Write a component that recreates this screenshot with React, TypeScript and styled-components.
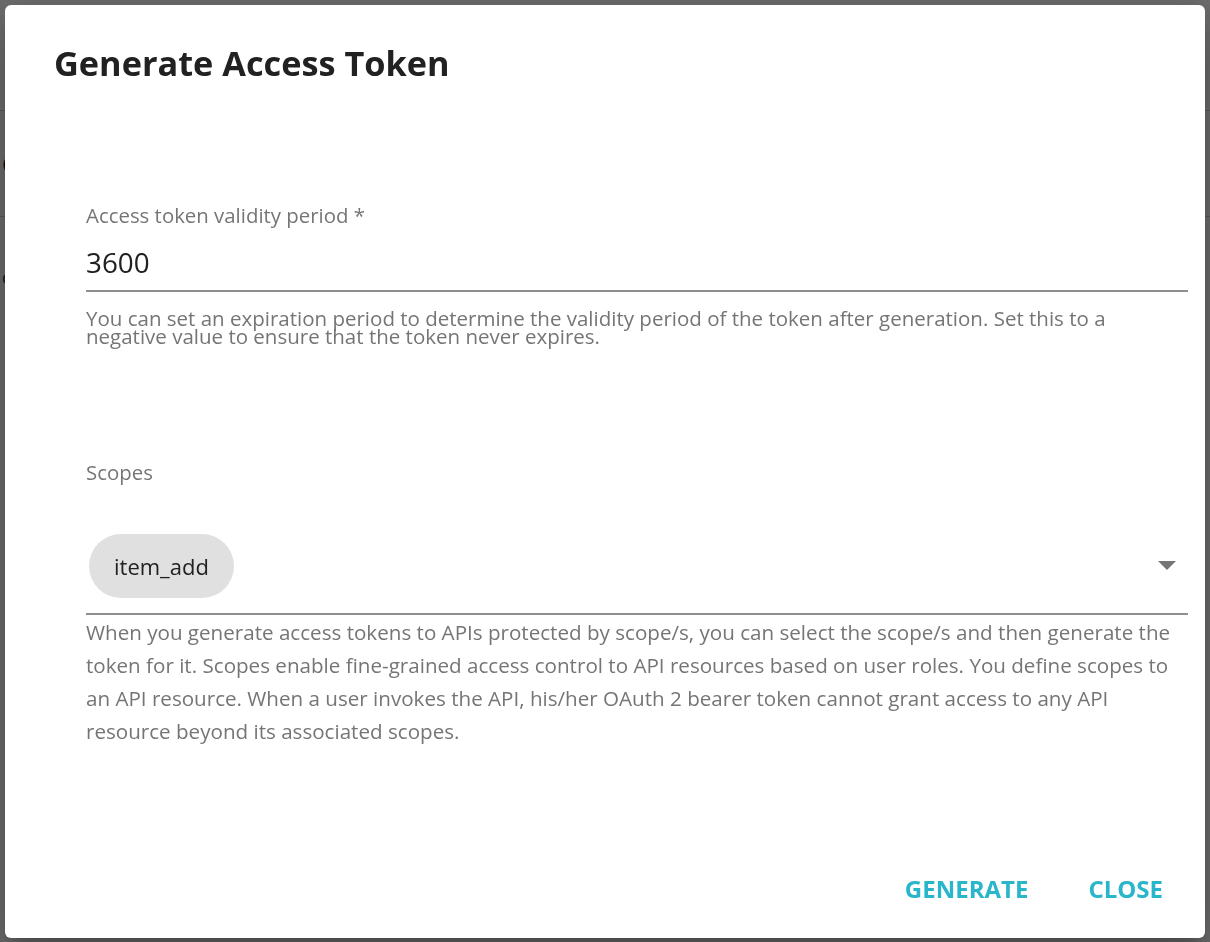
import React from 'react'
import styled, { createGlobalStyle } from 'styled-components'

const GlobalStyle = createGlobalStyle`
  html, body {
    margin: 0;
    padding: 0;
  }
  body {
    font-family: "Open Sans", "Noto Sans", Arial, sans-serif;
    background: #fff;
    color: #212121;
  }
`

const App = () => {
  const scopes = ['item_add']
  return (
    <>
      <GlobalStyle />
      <Page>
        <AppBar />
        <PageHeading>Consumer Keys</PageHeading>
        <PageBody>
          <p>consumer key and secret for the application</p>
        </PageBody>
      </Page>

      <Backdrop>
        <Dialog role='dialog' aria-labelledby='token-title'>
          <Title id='token-title'>Generate Access Token</Title>
          <DialogContent>
            <Field>
              <Label>Access token validity period *</Label>
              <InputLine>
                <Input defaultValue='3600' />
              </InputLine>
              <Helper>
                You can set an expiration period to determine the validity period of the token after generation. Set this to a negative value to ensure that the token never expires.
              </Helper>
            </Field>

            <Field spaced>
              <Label>Scopes</Label>
              <SelectLine>
                <Chips>
                  {scopes.map((scope) => (
                    <Chip key={scope}>{scope}</Chip>
                  ))}
                </Chips>
                <svg width='18' height='9' viewBox='0 0 18 9'>
                  <polygon points='0,0 18,0 9,9' fill='#757575' />
                </svg>
              </SelectLine>
              <Help>
                When you generate access tokens to APIs protected by scope/s, you can select the scope/s and then generate the token for it. Scopes enable fine-grained access control to API resources based on user roles. You define scopes to an API resource. When a user invokes the API, his/her OAuth 2 bearer token cannot grant access to any API resource beyond its associated scopes.
              </Help>
            </Field>
          </DialogContent>
          <Actions>
            <TextButton>Generate</TextButton>
            <TextButton>Close</TextButton>
          </Actions>
        </Dialog>
      </Backdrop>
    </>
  )
}

const Page = styled.div`
  min-height: 100vh;
  background: #fff;
`
const AppBar = styled.header`
  height: 110px;
  border-bottom: 1px solid #d0d0d0;
`
const PageHeading = styled.h2`
  margin: 0;
  height: 105px;
  display: flex;
  align-items: center;
  padding-left: 2px;
  font-size: 24px;
  font-weight: 600;
  border-bottom: 1px solid #d0d0d0;
`
const PageBody = styled.div`
  padding: 30px 2px;
  font-size: 18px;
  color: #333;
`

const Backdrop = styled.div`
  position: fixed;
  inset: 0;
  background: rgba(0, 0, 0, 0.58);
  display: flex;
  align-items: center;
  justify-content: center;
`
const Dialog = styled.div`
  width: 1200px;
  height: 933px;
  background: #fff;
  border-radius: 6px;
  box-shadow: 0 11px 15px -7px rgba(0,0,0,0.2), 0 24px 38px 3px rgba(0,0,0,0.14), 0 9px 46px 8px rgba(0,0,0,0.12);
  display: flex;
  flex-direction: column;
  box-sizing: border-box;
  padding: 38px 17px 27px 49px;
`
const Title = styled.h1`
  margin: 0;
  font-size: 34.3px;
  line-height: 40px;
  font-weight: 700;
  color: #212121;
`
const DialogContent = styled.div`
  flex: 1;
  padding-left: 32px;
  padding-top: 120px;
`
const Field = styled.div<{ spaced?: boolean }>`
  display: flex;
  flex-direction: column;
  margin-top: ${(p) => (p.spaced ? '115px' : '0')};
`
const Label = styled.label`
  font-size: 20.4px;
  line-height: 24px;
  color: #757575;
`
const InputLine = styled.div`
  margin-top: 18px;
  padding-bottom: 11px;
  border-bottom: 2px solid #8f8f8f;
`
const Input = styled.input`
  display: block;
  width: 100%;
  border: 0;
  outline: 0;
  padding: 0;
  font-family: inherit;
  font-size: 27.8px;
  line-height: 34px;
  height: 34px;
  color: #212121;
  background: transparent;
`
const Helper = styled.p`
  margin: 17px 0 0;
  font-size: 20.5px;
  line-height: 18px;
  color: #757575;
`
const SelectLine = styled.div`
  margin-top: 50px;
  padding: 0 12px 15px 3px;
  border-bottom: 2px solid #8f8f8f;
  display: flex;
  align-items: center;
  justify-content: space-between;
`
const Chips = styled.div`
  display: flex;
  gap: 8px;
`
const Chip = styled.span`
  display: inline-flex;
  align-items: center;
  height: 64px;
  padding: 0 25px;
  border-radius: 32px;
  background: #e0e0e0;
  font-size: 22px;
  color: #212121;
`
const Help = styled.p`
  margin: 1px 0 0;
  font-size: 20.6px;
  line-height: 33px;
  color: #757575;
`
const Actions = styled.div`
  display: flex;
  justify-content: flex-end;
  gap: 16px;
  padding-right: 3px;
`
const TextButton = styled.button`
  border: 0;
  background: transparent;
  padding: 8px 22px;
  font-family: inherit;
  font-size: 24px;
  line-height: 28px;
  font-weight: 700;
  text-transform: uppercase;
  color: #29b6cb;
  cursor: pointer;
`

export default App
